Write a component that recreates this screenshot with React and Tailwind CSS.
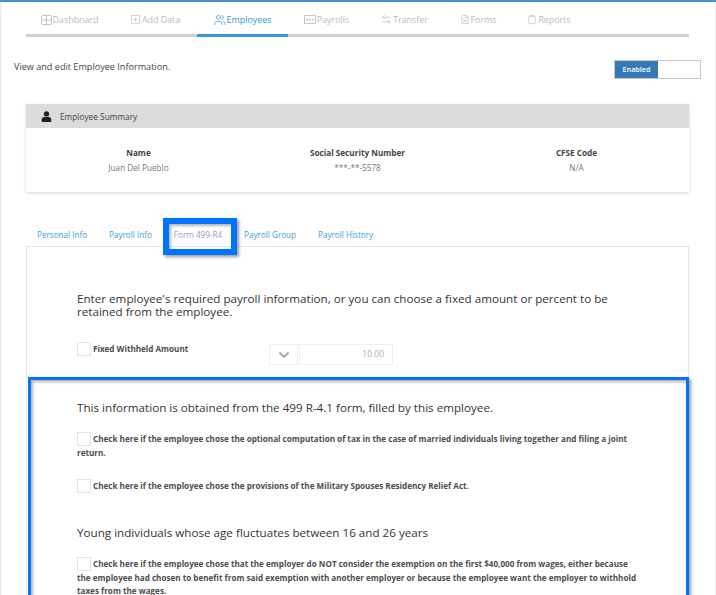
import React from 'react';
import { SquarePlus, Users, ArrowLeftRight, FileText, Clipboard, ChevronDown } from 'lucide-react';

const navItems = [
  { name: 'Dashboard', w: 'w-[87px]', icon: <DashIcon /> },
  { name: 'Add Data', w: 'w-[84px]', icon: <SquarePlus className="w-[11px] h-[11px]" strokeWidth={1.5} /> },
  { name: 'Employees', w: 'w-[91px]', icon: <Users className="w-[12px] h-[12px]" strokeWidth={1.5} />, active: true },
  { name: 'Payrolls', w: 'w-[77px]', icon: <PayrollIcon /> },
  { name: 'Transfer', w: 'w-[79px]', icon: <ArrowLeftRight className="w-[11px] h-[11px]" strokeWidth={1.5} /> },
  { name: 'Forms', w: 'w-[68px]', icon: <FileText className="w-[10px] h-[11px]" strokeWidth={1.5} /> },
  { name: 'Reports', w: 'w-[74px]', icon: <Clipboard className="w-[10px] h-[11px]" strokeWidth={1.5} /> },
];

function DashIcon() {
  return (
    <svg viewBox="0 0 12 11" className="w-[11px] h-[10px]" fill="none" stroke="currentColor">
      <rect x="0.5" y="0.5" width="11" height="10" rx="1" />
      <path d="M6 0.5v10M0.5 5.5h11" />
    </svg>
  );
}

function PayrollIcon() {
  return (
    <svg viewBox="0 0 14 10" className="w-[12px] h-[9px]" fill="none" stroke="currentColor">
      <rect x="0.5" y="0.5" width="13" height="9" />
      <path d="M2.5 5h2M6 5h2M9.5 5h2" strokeWidth="1.6" />
    </svg>
  );
}

const Box = () => (
  <span className="inline-block w-[14px] h-[14px] border border-[#e3e3e3] bg-white align-middle mr-[2px] -mt-[2px]" />
);

const tabs = ['Personal Info', 'Payroll Info', 'Form 499-R4', 'Payroll Group', 'Payroll History'];

export default function App() {
  return (
    <div className="relative h-[595px] w-[716px] overflow-hidden bg-white border-t-2 border-[#4a90c8] font-['Open_Sans',sans-serif] text-[#333]">
      <div className="border-l-[2px] border-[#f0f0f0] h-full">
        {/* top nav */}
        <nav className="ml-[24px] w-[663px] flex h-[35px] border-b-[3px] border-[#d2d2d2]">
          {navItems.map((item) => (
            <div
              key={item.name}
              className={`${item.w} h-[35px] pt-[3px] -mb-[3px] flex items-center justify-center gap-[1px] text-[8.9px] border-b-[3px] ${
                item.active ? 'text-[#3498db] border-[#3498db]' : 'text-[#bbbbbb] border-transparent'
              }`}
            >
              {item.icon}
              <span>{item.name}</span>
            </div>
          ))}
        </nav>

        <div className="flex justify-between items-start ml-[12px] mr-[15px] mt-[23px]">
          <p className="text-[9.1px] leading-[14px] text-[#444]">View and edit Employee Information.</p>
          <div className="flex w-[87px] h-[19px] border border-[#c8c8c8] bg-white">
            <div className="w-[43px] bg-[#337ab7] text-white text-[7.2px] font-semibold flex items-center justify-center">Enabled</div>
          </div>
        </div>

        {/* summary */}
        <section className="ml-[24px] w-[663px] mt-[25px] h-[88px] shadow-[0_1px_3px_rgba(0,0,0,0.18)] bg-white">
          <div className="h-[24px] pt-[2px] bg-[#dcdcdc] flex items-center pl-[15px] gap-[8px] text-[8.3px] text-[#444]">
            <svg viewBox="0 0 12 12" className="w-[11px] h-[11px] -mt-[2px]" fill="#222">
              <circle cx="6" cy="3.2" r="2.9" />
              <path d="M0.8 12V9.4C0.8 7.6 2.2 6.6 3.6 6.6h4.8c1.4 0 2.8 1 2.8 2.8V12z" />
            </svg>
            <span>Employee Summary</span>
          </div>
          <div className="grid grid-cols-3 px-[3px] pt-[17px] text-center text-[8.2px] leading-[15px]">
            <div>
              <div className="font-bold text-[#444]">Name</div>
              <div className="text-[#777]">Juan Del Pueblo</div>
            </div>
            <div>
              <div className="font-bold text-[#444]">Social Security Number</div>
              <div className="text-[#777]">***-**-5578</div>
            </div>
            <div>
              <div className="font-bold text-[#444]">CFSE Code</div>
              <div className="text-[#777]">N/A</div>
            </div>
          </div>
        </section>

        {/* tabs */}
        <div className="ml-[24px] mt-[29px] w-[663px] flex h-[26px] pt-[3px] border-b border-[#e6e6e6] pl-[11px] gap-[22px] items-center text-[8.15px] text-[#3b9ddd]">
          {tabs.map((t) => (
            <span key={t} className={t === 'Form 499-R4' ? 'text-[#9a9ac8]' : ''}>{t}</span>
          ))}
        </div>

        {/* form panel */}
        <div className="ml-[24px] w-[663px] border-x border-[#e6e6e6] h-[400px] pl-[50px] pr-[49px] pt-[45px]">
          <h3 className="text-[11.65px] leading-[13px] text-[#333]">
            Enter employee's required payroll information, or you can choose a fixed amount or percent to be retained from the employee.
          </h3>
          <div className="flex mt-[24px] h-[22px]">
            <label className="text-[8.1px] font-bold text-[#4d4d4d] w-[192px] leading-[14px]">
              <Box />Fixed Withheld Amount
            </label>
            <div className="flex mt-[2px] gap-[1px] h-[21px]">
              <div className="w-[29px] border border-[#efefef] flex items-center justify-center text-[#aaaaaa]">
                <ChevronDown className="w-[16px] h-[16px]" strokeWidth={3} />
              </div>
              <div className="w-[94px] border border-[#efefef] flex items-center justify-end pr-[8px] text-[8.5px] text-[#aaa]">10.00</div>
            </div>
          </div>

          <h3 className="text-[11.65px] leading-[15px] text-[#333] mt-[36px]">This information is obtained from the 499 R-4.1 form, filled by this employee.</h3>
          <p className="text-[8.12px] font-bold text-[#4d4d4d] leading-[14px] mt-[17px]">
            <Box />Check here if the employee chose the optional computation of tax in the case of married individuals living together and filing a joint return.
          </p>
          <p className="text-[8.12px] font-bold text-[#4d4d4d] leading-[14px] mt-[19px]">
            <Box />Check here if the employee chose the provisions of the Military Spouses Residency Relief Act.
          </p>
          <h3 className="text-[11.65px] leading-[15px] text-[#333] mt-[32px]">Young individuals whose age fluctuates between 16 and 26 years</h3>
          <p className="text-[8.12px] font-bold text-[#4d4d4d] leading-[13.5px] mt-[17px]">
            <Box />Check here if the employee chose that the employer do NOT consider the exemption on the first $40,000 from wages, either because the employee had chosen to benefit from said exemption with another employer or because the employee want the employer to withhold taxes from the wages.
          </p>
        </div>
      </div>

      {/* annotation highlights */}
      <div className="absolute left-[163px] top-[216px] w-[74px] h-[37px] border-[6px] border-[#0073ff] shadow-[2px_2px_3px_rgba(0,0,0,0.4),inset_2px_2px_3px_rgba(0,0,0,0.3)]" />
      <div className="absolute left-[28px] top-[375px] w-[661px] h-[260px] border-[3px] border-[#0073ff] shadow-[2px_2px_3px_rgba(0,0,0,0.4),inset_2px_2px_3px_rgba(0,0,0,0.3)]" />
      <div className="absolute right-0 top-0 bottom-0 w-[1px] bg-[#eeeeee]" />
    </div>
  );
}
